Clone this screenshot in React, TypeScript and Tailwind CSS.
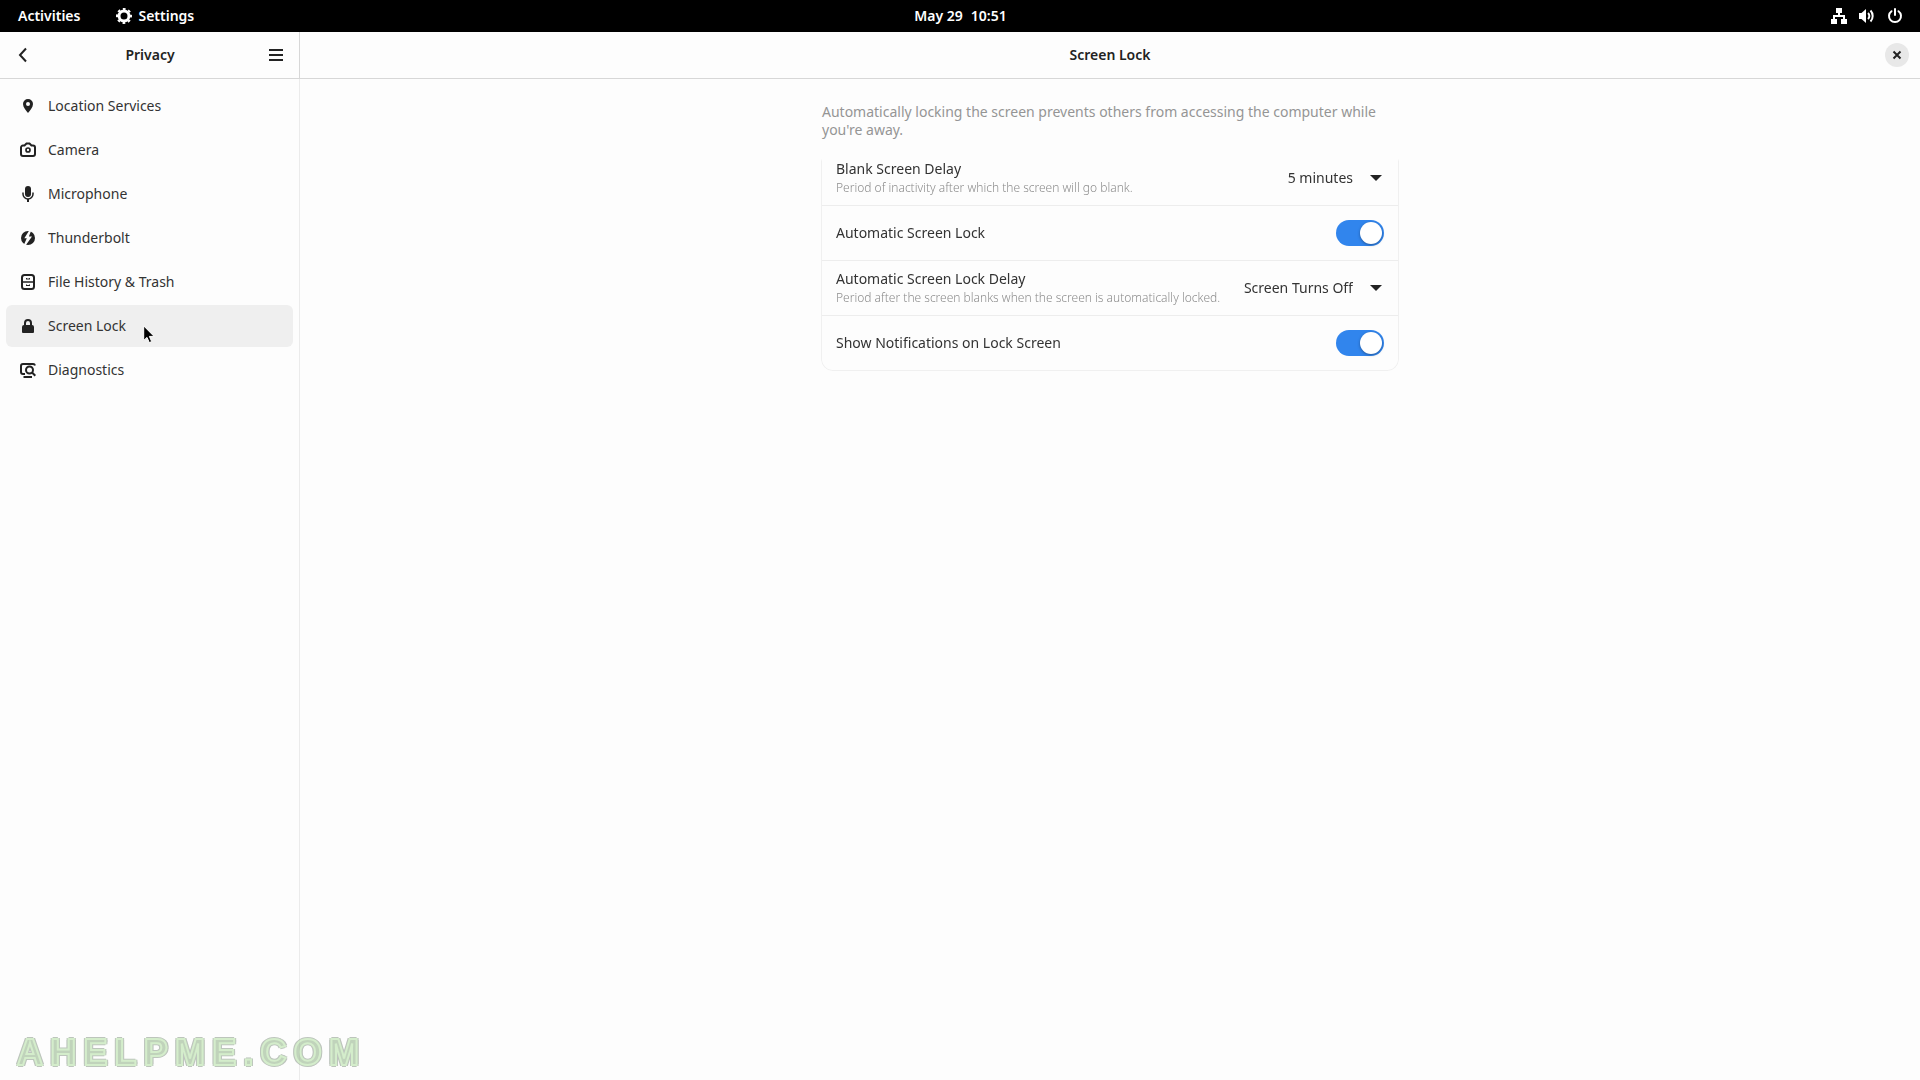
import { useState, type ReactNode } from "react";
import clsx from "clsx";

function Icon({ children, className }: { children: ReactNode; className?: string }) {
  return (
    <svg
      viewBox="0 0 16 16"
      className={clsx("w-4 h-4 shrink-0", className)}
      fill="currentColor"
      aria-hidden="true"
    >
      {children}
    </svg>
  );
}

const icons = {
  location: (
    <path
      fillRule="evenodd"
      d="M8 1a5 5 0 0 0-5 5c0 3.200 3 6.300 5 9 2-2.700 5-5.800 5-9a5 5 0 0 0-5-5zm0 3a2 2 0 1 1 0 4 2 2 0 0 1 0-4z"
    />
  ),
  camera: (
    <>
      <path
        d="M3 3.500h1.500L6.500 1.500h3l2 2H13a2 2 0 0 1 2 2v6.500a2 2 0 0 1-2 2H3a2 2 0 0 1-2-2V5.500a2 2 0 0 1 2-2z"
        fill="none"
        stroke="currentColor"
        strokeWidth="2"
      />
      <circle cx="8" cy="8" r="2" fill="none" stroke="currentColor" strokeWidth="1.700" />
    </>
  ),
  microphone: (
    <>
      <rect x="5" y="0" width="6" height="11" rx="3" />
      <path d="M3 6.500V8a5 5 0 0 0 10 0V6.500" fill="none" stroke="currentColor" strokeWidth="1.500" />
      <path d="M7 13h2v3H7z" />
    </>
  ),
  thunderbolt: (
    <>
      <circle cx="8" cy="8" r="7" />
      <path d="M9.200.500 4.300 8.300h2.500L3.600 15.500l1.800.300L12 6.500H8.900L11.200.500z" fill="#fdfdfd" />
    </>
  ),
  drawer: (
    <>
      <rect x="2" y="1" width="12" height="14" rx="2.500" fill="none" stroke="currentColor" strokeWidth="2" />
      <path d="M2 7.300h12v1.400H2zM6 4.500h4v1H6zM6 11h4v1H6z" />
      <path d="M6 4h1v1H6zM9 4h1v1H9zM6 10.500h1v1H6zM9 10.500h1v1H9z" />
    </>
  ),
  lock: (
    <path
      fillRule="evenodd"
      d="M8 1a4 4 0 0 0-4 4v2a2 2 0 0 0-2 2v5a1 1 0 0 0 1 1h10a1 1 0 0 0 1-1V9a2 2 0 0 0-2-2V5a4 4 0 0 0-4-4zm0 2a2 2 0 0 1 2 2v2H6V5a2 2 0 0 1 2-2z"
    />
  ),
  diagnostics: (
    <g fill="none" stroke="currentColor" strokeWidth="2">
      <path d="M5 12H3a2 2 0 0 1-2-2V4a2 2 0 0 1 2-2h10a2 2 0 0 1 2 1.500M3.500 15H12" />
      <circle cx="9.500" cy="8" r="3.500" />
      <path d="m12 10.500 3.300 3.300" />
    </g>
  ),
};

const sections: { label: string; icon: ReactNode }[] = [
  { label: "Location Services", icon: icons.location },
  { label: "Camera", icon: icons.camera },
  { label: "Microphone", icon: icons.microphone },
  { label: "Thunderbolt", icon: icons.thunderbolt },
  { label: "File History & Trash", icon: icons.drawer },
  { label: "Screen Lock", icon: icons.lock },
  { label: "Diagnostics", icon: icons.diagnostics },
];

function TopBar() {
  return (
    <header className="grid grid-cols-3 items-center h-8 pl-[18px] pr-[17px] bg-black text-white font-semibold">
      <div className="flex items-center gap-9">
        <button>Activities</button>
        <button className="flex items-center gap-1.5">
          <Icon>
            <g fill="none" stroke="currentColor">
              <circle cx="8" cy="8" r="5" strokeWidth="3" />
              <circle cx="8" cy="8" r="7" strokeWidth="2" strokeDasharray="2.750 2.748" strokeDashoffset="1.370" />
            </g>
          </Icon>
          Settings
        </button>
      </div>
      <button className="justify-self-center flex gap-2">
        <span>May 29</span>
        <span>10:51</span>
      </button>
      <button className="justify-self-end flex items-center gap-3" aria-label="System menu">
        <Icon>
          <path d="M5 0h6v5H5zM7 5h2v3H7zM2 7h12v2H2zM2 7h2v4H2zM12 7h2v4h-2zM0 11h6v5H0zM10 11h6v5h-6z" />
        </Icon>
        <Icon>
          <path d="M0 5h2.500L7 1v14l-4.500-4H0z" />
          <path
            d="M9 5a4 4 0 0 1 0 6M11.500 2.500a8 8 0 0 1 0 11"
            fill="none"
            stroke="currentColor"
            strokeWidth="2"
          />
        </Icon>
        <Icon>
          <path
            d="M4.500 3.200a6 6 0 1 0 7 0M8 1v6"
            fill="none"
            stroke="currentColor"
            strokeWidth="2"
            strokeLinecap="round"
          />
        </Icon>
      </button>
    </header>
  );
}

function Row({ id, title, subtitle, children }: {
  id: string;
  title: string;
  subtitle?: string;
  children: ReactNode;
}) {
  return (
    <div className="flex items-center justify-between h-[55px] px-3.5 border-b border-[#ededed] last:h-[54px] last:border-b-0">
      <label htmlFor={id} className="flex flex-col">
        <span className="leading-5">{title}</span>
        {subtitle && (
          <span className="text-xs leading-[18px] font-light text-[#8c8c8c]">{subtitle}</span>
        )}
      </label>
      {children}
    </div>
  );
}

function Dropdown({ id, options }: { id: string; options: string[] }) {
  return (
    <div className="relative flex items-center">
      <select id={id} className="appearance-none bg-transparent pr-[31px] text-right outline-none">
        {options.map((option) => (
          <option key={option}>{option}</option>
        ))}
      </select>
      <svg
        viewBox="0 0 12 6"
        className="absolute right-0.5 w-3 h-1.5 pointer-events-none"
        fill="#222"
        aria-hidden="true"
      >
        <path d="M0 0h12L6 6z" />
      </svg>
    </div>
  );
}

function Toggle({ id }: { id: string }) {
  const [on, setOn] = useState(true);

  return (
    <span className="relative flex">
      <input
        id={id}
        type="checkbox"
        role="switch"
        checked={on}
        onChange={() => setOn(!on)}
        className="peer appearance-none w-12 h-[26px] rounded-full bg-[#dcdcdc] checked:bg-[#3185ed]"
      />
      <span className="absolute top-0.5 left-0.5 size-[22px] rounded-full bg-white shadow-[0_1px_3px_rgba(0,0,0,0.35)] pointer-events-none peer-checked:left-6" />
    </span>
  );
}

export default function App() {
  const [active, setActive] = useState("Screen Lock");

  return (
    <div className="min-h-screen flex flex-col bg-[#fdfdfd] text-[#333] text-sm font-['Noto_Sans',sans-serif]">
      <TopBar />

      <div className="flex flex-1">
        <aside className="w-[300px] shrink-0 flex flex-col">
          <div className="flex items-center justify-between h-[47px] pl-4 pr-[15px] border-b border-r border-[#d7d7d7] text-[#222]">
            <button aria-label="Back">
              <Icon>
                <path d="m10 1.500-6 6.500 6 6.500" fill="none" stroke="currentColor" strokeWidth="2" />
              </Icon>
            </button>
            <h2 className="font-semibold">Privacy</h2>
            <button aria-label="Main menu">
              <Icon>
                <path d="M1 2h14v2H1zM1 7h14v2H1zM1 12h14v2H1z" />
              </Icon>
            </button>
          </div>

          <nav className="flex-1 border-r border-[#ebebeb] p-1.5">
            <ul className="flex flex-col gap-0.5">
              {sections.map(({ label, icon }) => (
                <li key={label} className="relative">
                  <button
                    onClick={() => setActive(label)}
                    className={clsx(
                      "flex items-center gap-3 w-full h-[42px] px-3.5 rounded-md text-left",
                      active === label && "bg-[#efefef]"
                    )}
                  >
                    <Icon className="text-[#222]">{icon}</Icon>
                    {label}
                  </button>
                  {label === "Screen Lock" && (
                    <svg
                      viewBox="0 0 12 19"
                      className="absolute left-[137px] top-5 w-3 h-[19px] pointer-events-none"
                      aria-hidden="true"
                    >
                      <path
                        d="M.7.900v14.500l3.300-3 2.300 5.200 2.400-1-2.300-5.200h4.700z"
                        fill="#000"
                        stroke="#fff"
                      />
                    </svg>
                  )}
                </li>
              ))}
            </ul>
          </nav>
        </aside>

        <main className="flex-1 flex flex-col">
          <div className="grid grid-cols-[24px_1fr_24px] items-center h-[47px] px-[11px] border-b border-[#d7d7d7] text-[#222]">
            <h1 className="col-start-2 text-center font-semibold">Screen Lock</h1>
            <button
              className="flex items-center justify-center size-6 rounded-full bg-[#e8e8e8]"
              aria-label="Close"
            >
              <Icon>
                <path d="m4.500 4.500 7 7m0-7-7 7" stroke="currentColor" strokeWidth="2" />
              </Icon>
            </button>
          </div>

          <section className="w-full max-w-[578px] mx-auto pt-6">
            <p className="px-px pb-3 leading-[18px] text-[#959595]">
              Automatically locking the screen prevents others from accessing the computer while
              you're away.
            </p>
            {/* the list's top edge fades out under the description */}
            <div className="border border-t-0 border-[#f0f0f0] rounded-b-xl [mask-image:linear-gradient(transparent_8px,#000_10px)]">
              <Row
                id="blank-delay"
                title="Blank Screen Delay"
                subtitle="Period of inactivity after which the screen will go blank."
              >
                <Dropdown id="blank-delay" options={["5 minutes", "10 minutes", "Never"]} />
              </Row>
              <Row id="auto-lock" title="Automatic Screen Lock">
                <Toggle id="auto-lock" />
              </Row>
              <Row
                id="lock-delay"
                title="Automatic Screen Lock Delay"
                subtitle="Period after the screen blanks when the screen is automatically locked."
              >
                <Dropdown id="lock-delay" options={["Screen Turns Off", "30 seconds", "1 minute"]} />
              </Row>
              <Row id="notifications" title="Show Notifications on Lock Screen">
                <Toggle id="notifications" />
              </Row>
            </div>
          </section>
        </main>
      </div>

      {/* Watermark: grey outer outline, pale green inner one, duller green fill */}
      <div className="fixed left-[17px] bottom-[7px] text-4xl font-bold tracking-[0.2em] pointer-events-none opacity-60 font-['Liberation_Sans',sans-serif]">
        <span className="text-[#98b88f] [-webkit-text-stroke:2px_#b9e3ab] [text-shadow:2px_1px_#93a092,-2px_-1px_#93a092,2px_-1px_#93a092,-2px_1px_#93a092,0_2px_#93a092,0_-2px_#93a092]">
          AHELPME.COM
        </span>
      </div>
    </div>
  );
}
